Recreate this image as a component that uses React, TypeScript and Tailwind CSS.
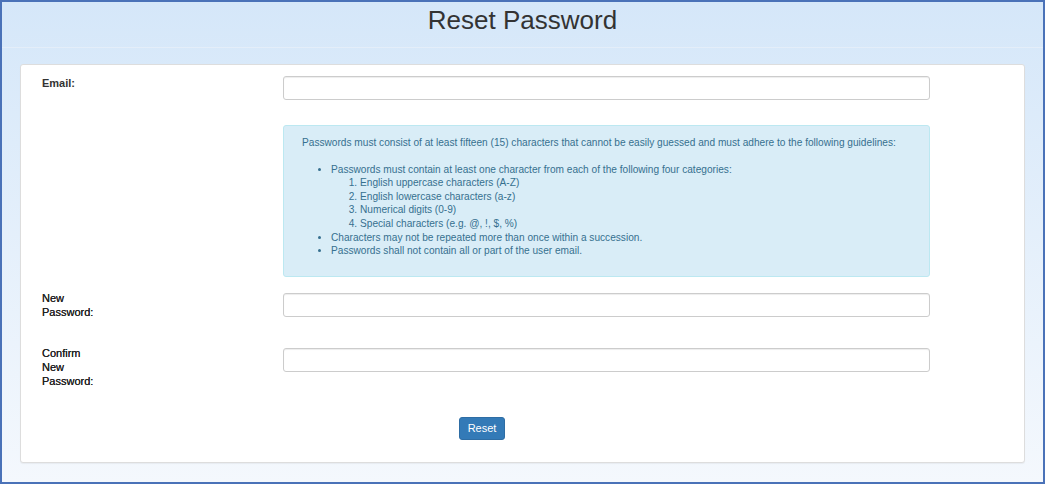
import React from 'react';

const Field = () => (
  <input
    type="text"
    className="h-[24px] w-[647px] rounded-[3px] border border-[#cccccc] bg-white px-2 text-[11px] shadow-[inset_0_1px_1px_rgba(0,0,0,0.075)] outline-none"
  />
);

const Label = ({ children, bold }: { children: React.ReactNode; bold?: boolean }) => (
  <div className="w-[241px] shrink-0">
    <div className={`w-[58px] text-[11px] leading-[14px] ${bold ? 'font-bold text-[#333333]' : 'text-[#222222] [text-shadow:0_0_0.4px_#222]'}`}>
      {children}
    </div>
  </div>
);

export default function App() {
  return (
    <div
      className="flex h-[484px] w-[1045px] flex-col border-2 border-[#4a72b8] bg-gradient-to-b from-[#d5e7f9] to-[#f4f8fd]"
      style={{ fontFamily: '"Liberation Sans", Arial, sans-serif' }}
    >
      {/* header */}
      <div className="flex h-[46px] shrink-0 items-start justify-center border-b border-[#e4eef9]">
        <h1 className="mt-[3px] text-[26px] leading-[30px] text-[#333333]">Reset Password</h1>
      </div>

      {/* card */}
      <div className="mx-[18px] mt-[16px] flex flex-col rounded-[3px] border border-[#dddddd] bg-white pl-[21px] pt-[11px] shadow-[0_1px_1px_rgba(0,0,0,0.05)]">
        <div className="flex h-[24px]">
          <Label bold>Email:</Label>
          <Field />
        </div>

        <div className="mt-[25px] flex">
          <div className="w-[241px] shrink-0" />
          <div className="w-[647px] rounded-[3px] border border-[#bce8f1] bg-[#d9edf7] pb-[18px] pl-[18px] pt-[10px] text-[10.15px] leading-[13.6px] text-[#36708f]">
            <p className="whitespace-nowrap">
              Passwords must consist of at least fifteen (15) characters that cannot be easily guessed and must adhere to
              the following guidelines:
            </p>
            <ul className="mt-[13px] list-disc pl-[29px]">
              <li>
                Passwords must contain at least one character from each of the following four categories:
                <ol className="list-decimal pl-[29px]">
                  <li>English uppercase characters (A-Z)</li>
                  <li>English lowercase characters (a-z)</li>
                  <li>Numerical digits (0-9)</li>
                  <li>Special characters (e.g. @, !, $, %)</li>
                </ol>
              </li>
              <li>Characters may not be repeated more than once within a succession.</li>
              <li>Passwords shall not contain all or part of the user email.</li>
            </ul>
          </div>
        </div>

        <div className="mt-[16px] flex h-[24px]">
          <Label>
            <div className="-mt-[2px]">New Password:</div>
          </Label>
          <Field />
        </div>

        <div className="mt-[31px] flex h-[24px]">
          <Label>
            <div className="-mt-[2px]">Confirm New Password:</div>
          </Label>
          <Field />
        </div>

        <div className="mb-[22px] mt-[45px] flex">
          <div className="w-[417px] shrink-0" />
          <button className="h-[23px] w-[46px] rounded-[3px] border border-[#2e6da4] bg-[#337ab7] text-[11px] text-white">
            Reset
          </button>
        </div>
      </div>
    </div>
  );
}
